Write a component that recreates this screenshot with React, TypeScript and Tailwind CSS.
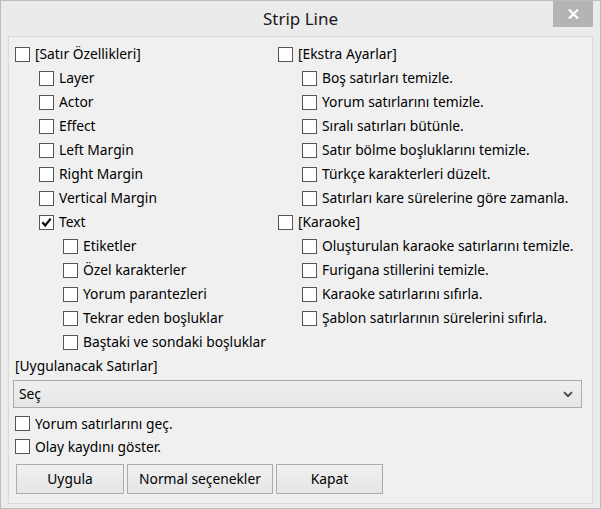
import React from 'react';

type Item = { label: string; level: number; checked?: boolean };

const leftItems: Item[] = [
  { label: '[Satır Özellikleri]', level: 0 },
  { label: 'Layer', level: 1 },
  { label: 'Actor', level: 1 },
  { label: 'Effect', level: 1 },
  { label: 'Left Margin', level: 1 },
  { label: 'Right Margin', level: 1 },
  { label: 'Vertical Margin', level: 1 },
  { label: 'Text', level: 1, checked: true },
  { label: 'Etiketler', level: 2 },
  { label: 'Özel karakterler', level: 2 },
  { label: 'Yorum parantezleri', level: 2 },
  { label: 'Tekrar eden boşluklar', level: 2 },
  { label: 'Baştaki ve sondaki boşluklar', level: 2 },
];

const rightItems: Item[] = [
  { label: '[Ekstra Ayarlar]', level: 0 },
  { label: 'Boş satırları temizle.', level: 1 },
  { label: 'Yorum satırlarını temizle.', level: 1 },
  { label: 'Sıralı satırları bütünle.', level: 1 },
  { label: 'Satır bölme boşluklarını temizle.', level: 1 },
  { label: 'Türkçe karakterleri düzelt.', level: 1 },
  { label: 'Satırları kare sürelerine göre zamanla.', level: 1 },
  { label: '[Karaoke]', level: 0 },
  { label: 'Oluşturulan karaoke satırlarını temizle.', level: 1 },
  { label: 'Furigana stillerini temizle.', level: 1 },
  { label: 'Karaoke satırlarını sıfırla.', level: 1 },
  { label: 'Şablon satırlarının sürelerini sıfırla.', level: 1 },
];

function Box({ checked }: { checked?: boolean }) {
  return (
    <span className="flex h-[15px] w-[15px] shrink-0 items-center justify-center border border-[#555] bg-white">
      {checked && (
        <svg width="11" height="11" viewBox="0 0 11 11">
          <path d="M1.3 5.3 L4.2 8.4 L9.7 1.6" fill="none" stroke="#111" strokeWidth="2.3" />
        </svg>
      )}
    </span>
  );
}

function Check({ item }: { item: Item }) {
  const indent = item.level === 0 ? 'pl-0' : item.level === 1 ? 'pl-[24px]' : 'pl-[48px]';
  return (
    <div className={`flex h-[24px] items-center gap-[5px] ${indent}`}>
      <Box checked={item.checked} />
      <span className="whitespace-nowrap">{item.label}</span>
    </div>
  );
}

function Btn({ label, className }: { label: string; className: string }) {
  return (
    <button
      className={`h-[30px] shrink-0 border border-[#acacac] bg-gradient-to-b from-[#f0f0f0] to-[#e5e5e5] text-center text-black ${className}`}
    >
      {label}
    </button>
  );
}

export default function App() {
  return (
    <div
      className="relative flex h-[509px] w-[601px] flex-col border border-[#bcbcbc] bg-[#ebebeb] text-[13.8px] leading-none text-black"
      style={{ fontFamily: '"Noto Sans", "Open Sans", sans-serif' }}
    >
      <div className="flex h-[35px] items-center justify-center text-[17px] text-[#1a1a1a]">Strip Line</div>
      <div className="absolute right-[7px] top-0 flex h-[26px] w-[40px] items-center justify-center bg-[#b4b4b4]">
        <svg width="11" height="10" viewBox="0 0 11 10">
          <path d="M1 0.5 L10 9.5 M10 0.5 L1 9.5" stroke="#fff" strokeWidth="2.2" />
        </svg>
      </div>

      <div className="mx-[7px] mb-[4px] flex flex-1 flex-col border border-[#dadada] bg-[#f0f0f0] pl-[6px] pt-[5px]">
        <div className="flex">
          <div className="flex w-[263px] flex-col">
            {leftItems.map((it) => (
              <Check key={it.label} item={it} />
            ))}
          </div>
          <div className="flex flex-col">
            {rightItems.map((it) => (
              <Check key={it.label} item={it} />
            ))}
          </div>
        </div>

        <div className="flex h-[24px] items-center">[Uygulanacak Satırlar]</div>
        <div className="mb-[4px] ml-[-2px] mt-[2px] flex h-[28px] w-[569px] items-center justify-between border border-[#acacac] bg-gradient-to-b from-[#efefef] to-[#e5e5e5] pl-[5px] pr-[8px]">
          <span>Seç</span>
          <svg width="10" height="7" viewBox="0 0 10 7">
            <path d="M1 1.2 L5 5.2 L9 1.2" fill="none" stroke="#444" strokeWidth="1.8" />
          </svg>
        </div>
        <div className="flex h-[23px] items-center gap-[5px]">
          <Box />
          <span>Yorum satırlarını geç.</span>
        </div>
        <div className="flex h-[23px] items-center gap-[5px]">
          <Box />
          <span>Olay kaydını göster.</span>
        </div>
        <div className="mt-[6px] flex gap-[3px] pl-[1px]">
          <Btn label="Uygula" className="w-[108px]" />
          <Btn label="Normal seçenekler" className="w-[146px]" />
          <Btn label="Kapat" className="w-[107px]" />
        </div>
      </div>
    </div>
  );
}
